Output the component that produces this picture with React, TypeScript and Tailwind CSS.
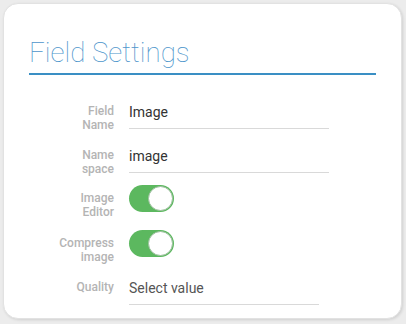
export default function App() {
  const font = { fontFamily: "Roboto, 'Liberation Sans', sans-serif" };
  return (
    <div className="w-[406px] h-[324px] bg-[#ececec] pt-[3px] pl-[3px]" style={font}>
      <div className="w-[399px] h-[316px] bg-white rounded-[15px] border border-[#e2e2e2] shadow-[1px_1px_3px_rgba(0,0,0,0.12)] pt-[33px] px-[25px]">
        <div className="border-b-2 border-[#3a8fc4] pb-[4px]">
          <h1 className="text-[27.7px] leading-[32px] font-thin text-[#4d95cb]">Field Settings</h1>
        </div>

        <div className="flex flex-col pt-[27px]">
          <Row className="h-[44px]" label={["Field", "Name"]}>
            <Input value="Image" />
          </Row>
          <Row className="h-[39px]" label={["Name", "space"]}>
            <Input value="image" />
          </Row>
          <Row className="h-[45px]" label={["Image", "Editor"]} toggle>
            <Toggle />
          </Row>
          <Row className="h-[48px]" label={["Compress", "image"]} toggle>
            <Toggle />
          </Row>
          <Row label={["Quality"]}>
            <Input value="Select value" muted narrow />
          </Row>
        </div>
      </div>
    </div>
  );
}

function Row({
  label,
  children,
  className,
  toggle,
}: {
  label: string[];
  children: React.ReactNode;
  className?: string;
  toggle?: boolean;
}) {
  return (
    <div className={"flex items-start gap-[15px] " + (className ?? "")}>
      <div
        className={
          "w-[85px] text-right text-[12px] leading-[14px] font-medium text-[#b4b4b4] " +
          (toggle ? "mt-[6px]" : "mt-[2px]")
        }
      >
        {label.map((l) => (
          <div key={l}>{l}</div>
        ))}
      </div>
      {children}
    </div>
  );
}

function Input({ value, muted, narrow }: { value: string; muted?: boolean; narrow?: boolean }) {
  return (
    <div
      className={
        "border-b border-[#d9d9d9] pb-[6px] text-[14px] leading-[20px] " +
        (narrow ? "w-[190px] " : "w-[200px] ") +
        (muted ? "text-[#555]" : "text-[#333]")
      }
    >
      {value}
    </div>
  );
}

function Toggle() {
  return (
    <div className="w-[45px] h-[27px] rounded-full bg-[#5cb85f] flex items-center justify-end pr-[1px]">
      <div className="w-[25px] h-[25px] rounded-full bg-white border border-[#9dbf9e]" />
    </div>
  );
}
